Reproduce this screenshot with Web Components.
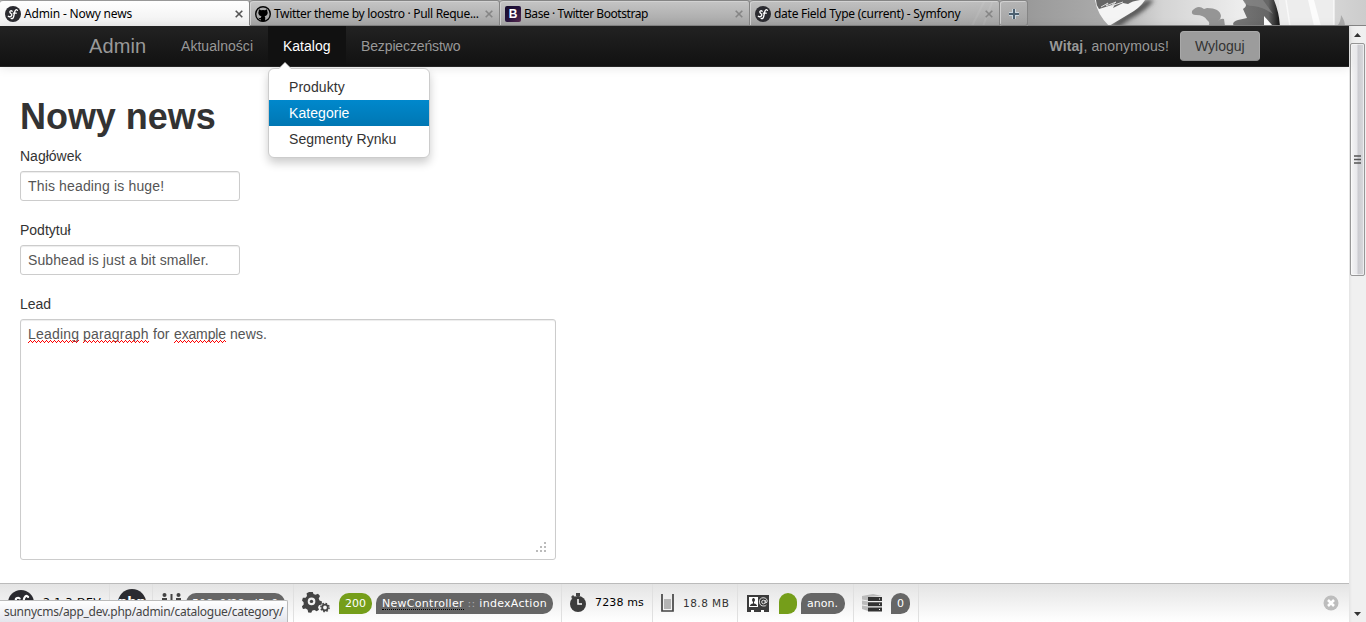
<!DOCTYPE html>
<html lang="pl">
<head>
<meta charset="utf-8">
<title>Admin - Nowy news</title>
<style>
html,body{margin:0;height:100%;overflow:hidden;background:#fff}
body{font:14px/20px "Liberation Sans",Arial,sans-serif;color:#333}
</style>
</head>
<body>
<admin-window></admin-window>
<script>
const define = (name, html) => customElements.define(name, class extends HTMLElement {
  constructor() {
    super();
    const t = document.createElement('template');
    t.innerHTML = html;
    this.attachShadow({mode: 'open'}).appendChild(t.content.cloneNode(true));
  }
});

define('sf-mark', `<style>:host{display:block;width:16px;height:16px}svg{display:block;width:100%;height:100%}</style>
<svg viewBox="0 0 16 16"><circle cx="8" cy="8" r="8" fill="#2b2b30"/><g fill="none" stroke="#fff" stroke-width="1.3" stroke-linecap="round"><path d="M7.2 5.2C5.9 4.1 4.3 5.4 5 6.6c.6 1 2 1.300 1.800 2.500C6.500 10.500 4.500 11.300 3.300 10.300"/><path d="M12.400 4.300C11.200 2.800 10 4.200 9.700 6L8.700 10.500C8.300 12.300 7.300 13.100 6.200 12.400M8.300 7.200h3"/></g></svg>`);

define('github-mark', `<style>:host{display:block;width:16px;height:16px}svg{display:block}</style>
<svg width="16" height="16" viewBox="0 0 16 16"><circle cx="8" cy="8" r="7.300" fill="#aaa" stroke="#050505" stroke-width="1.400"/><path fill="#000" d="M4 3.200 6 4.200Q8 3.700 10 4.200L12 3.200 12.300 5.300Q13 6.600 12.500 8 11.800 9.900 9.600 10.200L10.200 11.200V15.200H5.800V13.200Q3.900 13.400 3.300 11.500 4.600 12.400 5.800 11.800L6.400 10.200Q4.200 9.900 3.500 8 3 6.500 3.700 5.300Z"/></svg>`);

define('bootstrap-mark', `<style>:host{display:flex;width:16px;height:16px;border-radius:2px;background:linear-gradient(135deg,#150b2b,#25133d 50%,#5a2b50);align-items:center;justify-content:center;color:#fff;font:bold 12px/16px "Liberation Sans",sans-serif}</style>B`);

define('browser-tab', `<style>
:host{box-sizing:border-box;display:flex;width:250px;flex:none;height:26px;align-items:center;padding:1px 6px 0 5px;border:1px solid #858585;border-width:1px 1px 1px 0;box-shadow:inset 1px 1px #d2d2d2;border-radius:3px 3px 0 0;background:linear-gradient(#c5c5c5,#a6a6a6);font:12px/16px "Noto Sans","Open Sans",sans-serif;color:#000}
:host([active]){background:linear-gradient(#fff,#f0f0f0);border-bottom-color:#f0f0f0;border-top-color:#999;box-shadow:none}
:host([glass]){background:linear-gradient(#c5c5c5cc,#a6a6a6aa)}
.t{flex:1;min-width:0;white-space:nowrap;margin-left:3px;letter-spacing:var(--ls,-.2px)}
svg{display:block;flex:none}path{stroke:#858585;stroke-width:1.600}:host([active]) path{stroke:#555}
</style><slot name="icon"></slot><span class="t"><slot></slot></span><svg width="8" height="8"><path d="m.7.700 6.600 6.600m0-6.600L.7 7.300"/></svg>`);

define('tab-strip', `<style>
:host{display:grid;height:26px;overflow:hidden;background:linear-gradient(#b0b0b0,#999)}
.bg{display:block;justify-self:end;grid-area:1/1}
nav{grid-area:1/1;display:flex;z-index:1}.plus{box-sizing:border-box;width:28px;height:26px;border:1px solid #858585;border-left-width:0;border-radius:3px;background:linear-gradient(#c0c0c0b0,#a6a6a6b0);display:grid;place-items:center;padding-top:2px;box-shadow:inset 1px 1px #d0d0d0}
</style>
<svg class="bg" width="406" height="26" viewBox="960 0 406 26"><defs><linearGradient id="a"><stop stop-color="#aaa"/><stop offset=".16" stop-color="#999"/><stop offset=".35" stop-color="#aaa"/><stop offset=".5" stop-color="#d4d4d4"/><stop offset=".7" stop-color="#eee"/><stop offset="1" stop-color="#ccc"/></linearGradient><linearGradient id="k"><stop stop-color="#777"/><stop offset=".75" stop-color="#666"/><stop offset="1" stop-color="#111"/></linearGradient><filter id="b"><feGaussianBlur stdDeviation="2"/></filter></defs>
<path fill="url(#a)" d="M960 0h406v26H960z"/><path d="m972 26 13-26m-2 26 10-26" stroke="#ccc" stroke-width="2" opacity=".5"/>
<path d="M1108 26 1146 0h8q-8 11-24 19l-10 7z" fill="#555" filter="url(#b)"/>
<path d="M1095 0h50q-5 8-16 14l-20 12q-12-12-14-26z" fill="#f4f4f4"/><path d="M1096 0h44q-8 1-12 4l-5-1-10 5 2-4-16 5q-3-4-3-9z" fill="#666"/><path d="m1101 7 7-4-2 3 10-4-5 4 12-4" stroke="#ddd" fill="none"/>
<path d="M1192 11q6-7 12-2l3-1q13 0 14 8 0 3-3 5 3-3 6-2l1 7h-17q3-3-1-6-3-5-11-5-5 0-4-4z" fill="#959595"/>
<path d="M1243 0h31q5 12 6 26h-46q-3-4 4-6l9-2-4-9q6-3 0-9z" fill="url(#k)"/><path d="M1243 0h20l10 14q-10-7-20-8-8 0-10-6z" fill="#888" opacity=".7"/><path d="M1264 16v10h9z" fill="#fff"/>
<path d="M1279 0h55v26h-54z" fill="#ededed"/><path d="m1308 0 6 26h7L1314 0z" fill="#fff" opacity=".8"/><path d="m1286 0 4 26M1334 0v26" stroke="#fff" stroke-width="1.500" opacity=".7"/><path d="M1337 26q4-4 4-11 4 6 4 11z" fill="#aaa"/><path d="M1028 25.500h338" stroke="#848484"/></svg>
<nav><browser-tab active style="--ls:-.16px"><sf-mark slot="icon"></sf-mark>Admin - Nowy news</browser-tab><browser-tab style="--ls:-.31px"><github-mark slot="icon"></github-mark>Twitter theme by loostro · Pull Reque...</browser-tab><browser-tab style="--ls:-.44px"><bootstrap-mark slot="icon"></bootstrap-mark>Base · Twitter Bootstrap</browser-tab><browser-tab glass style="--ls:-.26px"><sf-mark slot="icon"></sf-mark>date Field Type (current) - Symfony</browser-tab><span class="plus"><svg width="12" height="12"><path d="M6 1v10M1 6h10" stroke="#ccd7df" stroke-width="4"/><path d="M6 1v10M1 6h10" stroke="#4d6171" stroke-width="2"/></svg></span></nav>`);

define('drop-menu', `<style>
:host{position:absolute;z-index:5;left:0;top:42px;box-sizing:border-box;width:162px;height:90px;padding:5px 0;background:#fff;border:1px solid #ccc;border-radius:6px;box-shadow:0 5px 10px rgba(0,0,0,.2);color:#333}
:host::before{content:"";position:absolute;left:9px;top:-7px;border:7px solid transparent;border-top:0;border-bottom-color:#ccc}
:host::after{content:"";position:absolute;left:10px;top:-6px;border:6px solid transparent;border-top:0;border-bottom-color:#fff}
div{height:20px;padding:3px 20px;white-space:nowrap;letter-spacing:.06px}.on{color:#fff;background:linear-gradient(#08c,#0077b3)}
</style><div>Produkty</div><div class="on">Kategorie</div><div>Segmenty Rynku</div>`);

define('nav-bar', `<style>
:host{box-sizing:border-box;display:flex;height:41px;flex:none;padding:0 89px 0 69px;background:linear-gradient(#222,#111);border-bottom:1px solid #252525;box-shadow:0 1px 10px rgba(0,0,0,.1);color:#999;text-shadow:0 -1px rgba(0,0,0,.25);position:relative;z-index:2}
.brand{box-sizing:border-box;width:97px;font-size:20px;line-height:20px;padding:10px 20px;text-shadow:none;letter-spacing:.1px}
.i{box-sizing:border-box;padding:10px 0 10px 15px;white-space:nowrap}.n1{width:102px;letter-spacing:.04px}.on{width:78px;position:relative;background:#111;color:#fff}.n3{letter-spacing:-.13px}
drop-menu{text-shadow:none}
.user{margin-left:auto;display:flex;align-items:center;gap:11px;letter-spacing:.13px}
.btn{box-sizing:border-box;width:80px;height:30px;padding:4px 0 4px 14px;border:1px solid #aaa;border-color:#a9a9a9 #a9a9a9 #8b8b8b;border-radius:4px;background:#9c9c9c;color:#333;text-shadow:none;letter-spacing:0}
</style><span class="brand">Admin</span><span class="i n1">Aktualności</span><span class="i on">Katalog<drop-menu></drop-menu></span><span class="i n3">Bezpieczeństwo</span><span class="user"><span><b>Witaj</b>, anonymous!</span><span class="btn">Wyloguj</span></span>`);

define('form-field', `<style>
:host{display:block;margin-bottom:19px}.l{margin-bottom:5px}
.c{box-sizing:border-box;width:220px;height:30px;padding:4px 7px;border:1px solid #ccc;border-radius:3px;box-shadow:inset 0 1px 1px rgba(0,0,0,.075);color:#555;display:flex;justify-content:space-between;background:#fff;letter-spacing:var(--ls,.08px)}
:host([area]) .c{width:536px;height:241px;padding-right:8px}
svg{align-self:flex-end;display:none;margin-bottom:2px}:host([area]) svg{display:block}
</style><div class="l"><slot name="label"></slot></div><div class="c"><span><slot></slot></span><svg width="12" height="12" fill="#bbb"><path d="M9 1h2v2H9zM5 5h2v2H5zM9 5h2v2H9zM1 9h2v2H1zM5 9h2v2H5zM9 9h2v2H9z"/></svg></div>`);

define('misspelt-word', `<style>:host{display:inline-block;height:20px}span{display:block;height:20px;white-space:nowrap}svg{display:block;width:100%;height:3px;margin-top:-4px}</style><span><slot></slot></span><svg><defs><pattern id="w" width="4" height="3" patternUnits="userSpaceOnUse"><path d="M0 2h1v1H0zM1 1h1v1H1zM2 0h1v1H2zM3 1h1v1H3z" fill="red"/></pattern></defs><rect width="100%" height="3" fill="url(#w)"/></svg>`);

define('news-form', `<style>:host{display:block;flex:1;min-height:0;padding:29px 20px 0;overflow:hidden}h1{font-size:36px;line-height:40px;margin:0;padding:1px 0 9px;color:#333;letter-spacing:-.05px}misspelt-word{vertical-align:top}.f{display:inline-block;width:17px}.line{word-spacing:.03px}</style>
<h1>Nowy news</h1><form-field style="--ls:.15px"><span slot="label">Nagłówek</span>This heading is huge!</form-field><form-field><span slot="label">Podtytuł</span>Subhead is just a bit smaller.</form-field><form-field area><span slot="label">Lead</span><span class="line"><misspelt-word style="width:51px;letter-spacing:.2px">Leading</misspelt-word> <misspelt-word style="width:66px;letter-spacing:.2px">paragraph</misspelt-word> <span class="f">for</span> <misspelt-word style="width:52px;letter-spacing:-.15px">example</misspelt-word> news.</span></form-field>`);

define('debug-pill', `<style>:host{box-sizing:border-box;display:block;flex:none;height:21px;padding:0 6px;border-radius:10px 10px 10px 0;background:#666;color:#fff;line-height:21px;white-space:nowrap}:host([left]){border-radius:10px}:host([green]){background:#759e1a}</style><slot></slot>`);

define('debug-bar', `<style>
:host{box-sizing:border-box;display:flex;height:39px;flex:none;border-top:1px solid #bbb;background:linear-gradient(#e4e4e4,#fff);font:11px/20px "DejaVu Sans",Verdana,sans-serif;color:#000;position:relative;z-index:3}
.s{box-sizing:border-box;display:flex;align-items:center;height:38px;padding-left:8px;border-right:1px solid #e0e0e0;white-space:nowrap;flex:none}
svg{display:block;flex:none}.php{width:28px;height:28px;border-radius:50%;background:#2b2b30;color:#fff;text-align:center;font:bold 13px/26px "DejaVu Sans",sans-serif}
.end{margin:0 10px 0 auto;align-self:center}u{text-decoration:none;display:inline-block;height:16px;line-height:21px;border-bottom:1px dotted #000}
</style>
<div class="s" style="width:110px;gap:9px"><sf-mark style="width:26px;height:28px"></sf-mark><span style="letter-spacing:.35px">2.1.3-DEV</span></div>
<div class="s" style="width:43px"><span class="php">php</span></div>
<div class="s" style="width:141px;gap:4px"><svg width="21" height="26" fill="#444"><circle cx="3.500" cy="5" r="2"/><circle cx="17.500" cy="5" r="2"/><path d="M9.500 4h2v18h-2zM1 8h5v14H1zM15 8h5v14h-5zM6 12h9v3H6z"/></svg><debug-pill left style="width:99px;letter-spacing:.1px">508c9f28cd5c0</debug-pill></div>
<div class="s" style="width:268px"><svg width="28" height="22" fill="#444"><path fill-rule="evenodd" d="m7.500 1 3-.8 1 2.700 2 .9 2.500-1.100 2 2.200-1.300 2.500.8 2.200 2.500.9-.3 2.900-2.700.9-1 1.900 1 2.500-2.300 1.600-2.300-1.400-2 .6-1.200 2.300-3-.4-.6-2.700-1.900-1.200-2.700.6-1.200-2.700 1.900-2-.1-2.100L0 9.600l.9-2.800 2.700-.1L5 5l-.4-2.700L7.100 1zM9.500 6.600a3.800 3.800 0 1 0 .1 7.600A3.800 3.800 0 0 0 9.500 6.600" transform="translate(0 -1)"/><circle cx="9.500" cy="9.400" r="1.700"/><circle cx="23" cy="15.500" r="2.800" fill="none" stroke="#444" stroke-width="1.800"/><circle cx="23" cy="15.500" r="4.100" fill="none" stroke="#444" stroke-width="1.500" stroke-dasharray="1.610 1.610"/></svg><debug-pill green style="margin-left:9px;width:33px">200</debug-pill><debug-pill style="margin-left:4px;width:177px;letter-spacing:.28px"><u>NewController</u> <span style="color:#aaa">::</span> indexAction</debug-pill></div>
<div class="s" style="width:91px;gap:9px"><svg width="16" height="20"><path d="M6 0h4v3H6zM1 4l2-2 2 2-2 2z" fill="#444"/><circle cx="8" cy="11" r="8" fill="#3c3c3c"/><path d="M8 6v5h4" stroke="#fff" stroke-width="1.500" fill="none"/></svg><span style="letter-spacing:.13px">7238 ms</span></div>
<div class="s" style="width:85px;gap:9px;color:#333;font-size:10.500px"><svg width="13" height="18"><path d="M1 0v17h11V0" fill="none" stroke="#444" stroke-width="1.700"/><path d="M3 5h7v10H3z" fill="#b5b5b5"/></svg><span style="letter-spacing:.48px">18.8 MB</span></div>
<div class="s" style="width:116px;padding-left:9px"><svg width="22" height="17"><path d="M0 0h22v17H0z" fill="#3b3b3b"/><path d="M2 2h9v10H2z" fill="#fff"/><path d="M3 11q0-2 3-2.500V7q-2-2 0-4h1q2 2 0 4v1.500q3 .5 3 2.500z" fill="#333"/><circle cx="16.500" cy="7" r="1.800" fill="none" stroke="#ddd"/><path d="M18.300 5v3q2.500 0 1.800-3-1-2.500-4-2.300-4 .5-3.700 4.500.5 4 4.500 3.800 2 0 2.500-1" fill="none" stroke="#ddd"/><path d="M4 17v-2h3v2m7 0v-2h3v2" fill="#fff"/></svg><debug-pill green style="width:18px;padding:0;margin-left:10px"></debug-pill><debug-pill style="margin-left:4px;width:44px">anon.</debug-pill></div>
<div class="s" style="width:65px;gap:9px"><svg width="20" height="18"><path d="M0 2 11 0l9 2-14 1v14l-6-2z" fill="#bbb"/><path d="M0 6l6 1M0 11l6 1" stroke="#eee"/><path d="M6 3h14v4H6zm0 5.300h14v4H6zM6 13.500h14v4H6z" fill="#333"/><path d="M17 4.500h1v1h-1zm0 5.300h1v1h-1zm0 5.200h1v1h-1z" fill="#fff"/></svg><debug-pill>0</debug-pill></div>
<svg class="end" width="16" height="16"><circle cx="8" cy="8" r="7.500" fill="#bdbdbd"/><path d="m5 5 6 6m0-6-6 6" stroke="#fff" stroke-width="2.500"/></svg>`);

define('scroll-track', `<style>
:host{box-sizing:border-box;display:flex;flex-direction:column;align-items:center;width:17px;background:linear-gradient(90deg,#e4e4e4,#f0f0f0 3px)}
.a{height:17px;width:17px;display:grid;place-items:center}
.th{box-sizing:border-box;width:15px;height:233px;border:1px solid #979797;border-radius:2px;background:linear-gradient(90deg,#f5f5f5,#e8e8eb 45%,#cbcbd0 55%,#dadadd);box-shadow:inset 0 0 0 1px #fff8;display:grid;place-items:center}.g{flex:1}svg{display:block}
</style><span class="a"><svg width="7" height="4"><path d="M3.500 0 7 4H0z" fill="#333"/></svg></span><span class="th"><svg width="7" height="9"><path d="M0 1h7M0 4.500h7M0 8h7" stroke="#555" stroke-width="1.400"/></svg></span><span class="g"></span><span class="a"><svg width="7" height="4"><path d="M0 0h7L3.500 4z" fill="#333"/></svg></span>`);

define('link-status', `<style>:host{box-sizing:border-box;display:block;position:absolute;left:0;bottom:0;z-index:10;width:288px;height:22px;padding:0 4px;border:1px solid #bbb;border-left:0;border-bottom:0;border-radius:0 2px 0 0;background:linear-gradient(#fff,#e4e5ec);color:#444;font:12px/22px "Noto Sans","Open Sans",sans-serif;letter-spacing:-.27px;white-space:nowrap}</style>sunnycms/app_dev.php/admin/catalogue/category/`);

define('admin-window', `<style>:host{display:flex;flex-direction:column;height:622px;width:1366px;position:relative;overflow:hidden}.row{display:flex;flex:1;min-height:0}.page{width:1349px;display:flex;flex-direction:column}</style>
<tab-strip></tab-strip><div class="row"><div class="page"><nav-bar></nav-bar><news-form></news-form><debug-bar></debug-bar></div><scroll-track></scroll-track></div><link-status></link-status>`);
</script>
</body>
</html>
